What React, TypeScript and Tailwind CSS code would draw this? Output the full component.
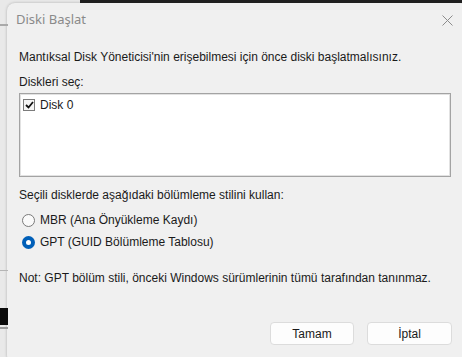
import React from "react";

export default function App() {
  const body = { fontFamily: '"Liberation Sans", Arial, sans-serif' };
  return (
    <div className="relative w-[462px] h-[357px] overflow-hidden bg-[#e9e9e9]" style={body}>
      {/* background window bits */}
      <div className="absolute left-[80px] top-0 right-0 h-[3px] bg-[#202020]" />
      <div className="absolute left-0 top-[24px] w-[8px] h-[2px] bg-[#a9a9a9]" />
      <div className="absolute left-0 top-[270px] w-[8px] h-[1px] bg-[#b5b5b5]" />
      <div className="absolute left-0 top-[308px] w-[8px] h-[17px] bg-[#0a0a0a]" />
      <div className="absolute left-0 top-[327px] w-[8px] h-[2px] bg-[#9a9a9a]" />

      <div className="flex h-full pt-[3px] pl-[7px]">
        <div className="flex-1 flex flex-col bg-[#f0f0f0] rounded-[8px] shadow-[0_0_3px_rgba(0,0,0,0.25)] mb-[-6px] mr-[-6px]">
          {/* title bar */}
          <div className="flex items-center h-[34px] pl-[9px] pr-[14px]">
            <span className="text-[13px] text-[#8a8a8a]" style={{ fontFamily: '"Noto Sans", sans-serif' }}>
              Diski Başlat
            </span>
            <div className="flex-1" />
            <svg width="11" height="11" viewBox="0 0 11 11" className="mr-[1px]">
              <path d="M0.5 0.5 L10.5 10.5 M10.5 0.5 L0.5 10.5" stroke="#8c8c8c" strokeWidth="1" />
            </svg>
          </div>

          <div className="flex flex-col pl-[12px] pr-[12px] text-[12px] text-[#1a1a1a]">
            <div className="mt-[13px] h-[14px] leading-[14px]">
              Mantıksal Disk Yöneticisi'nin erişebilmesi için önce diski başlatmalısınız.
            </div>
            <div className="mt-[11px] h-[14px] leading-[14px]">Diskleri seç:</div>
            <div className="mt-[4px] h-[84px] mr-[5px] bg-white border border-[#a3a3a3] shadow-[inset_0_0_0_1px_#e2e2e2] pt-[4px] pl-[3px]">
              <div className="flex items-center gap-[5px]">
                <div className="w-[12px] h-[12px] border border-[#7b7b7b] bg-[#f5f5f5] flex items-center justify-center">
                  <svg width="9" height="8" viewBox="0 0 9 8">
                    <path d="M1 4 L3.5 6.5 L8 1" stroke="#111" strokeWidth="1.8" fill="none" />
                  </svg>
                </div>
                <span className="leading-[14px]">Disk 0</span>
              </div>
            </div>
            <div className="mt-[11px] h-[14px] leading-[14px]">
              Seçili disklerde aşağıdaki bölümleme stilini kullan:
            </div>
            <div className="mt-[11px] flex items-center gap-[5px] pl-[3px]">
              <div className="w-[13px] h-[13px] rounded-full border border-[#7a7a7a] bg-[#fafafa]" />
              <span className="leading-[14px]">MBR (Ana Önyükleme Kaydı)</span>
            </div>
            <div className="mt-[8px] flex items-center gap-[5px] pl-[3px]">
              <div className="w-[13px] h-[13px] rounded-full bg-[#005fb8] flex items-center justify-center">
                <div className="w-[5px] h-[5px] rounded-full bg-white" />
              </div>
              <span className="leading-[14px]">GPT (GUID Bölümleme Tablosu)</span>
            </div>
            <div className="mt-[22px] h-[14px] leading-[14px]">
              Not: GPT bölüm stili, önceki Windows sürümlerinin tümü tarafından tanınmaz.
            </div>
            <div className="mt-[37px] flex justify-end gap-[13px] mr-[4px]">
              <button className="w-[84px] h-[23px] bg-[#fdfdfd] border border-[#dcdcdc] rounded-[4px] text-[12px] text-[#1a1a1a]">
                Tamam
              </button>
              <button className="w-[85px] h-[23px] bg-[#fdfdfd] border border-[#dcdcdc] rounded-[4px] text-[12px] text-[#1a1a1a]">
                İptal
              </button>
            </div>
          </div>
        </div>
      </div>
    </div>
  );
}
